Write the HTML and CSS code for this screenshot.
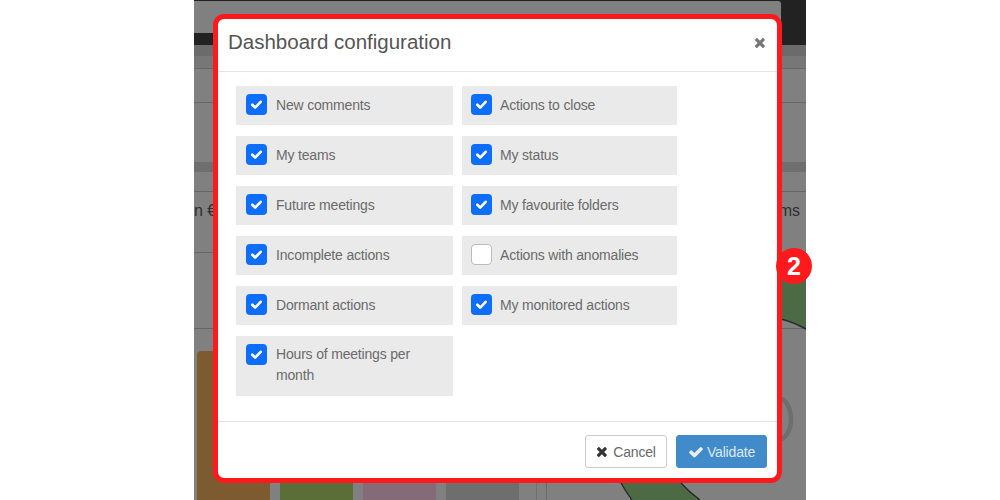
FILE: index.html
```html
<!DOCTYPE html>
<html lang="en">
<head>
<meta charset="utf-8">
<title>Dashboard configuration</title>
<link rel="stylesheet" href="styles.css">
</head>
<body>
<svg class="sprite" width="0" height="0" aria-hidden="true">
  <symbol id="fa-check" viewBox="0 0 1792 1792"><path d="M1671 566q0 40-28 68l-724 724-136 136q-28 28-68 28t-68-28l-136-136-362-362q-28-28-28-68t28-68l136-136q28-28 68-28t68 28l294 295 656-657q28-28 68-28t68 28l136 136q28 28 28 68z"/></symbol>
  <symbol id="fa-times" viewBox="0 0 1792 1792"><path d="M1298 1322q0 40-28 68l-136 136q-28 28-68 28t-68-28l-294-294-294 294q-28 28-68 28t-68-28l-136-136q-28-28-28-68t28-68l294-294-294-294q-28-28-28-68t28-68l136-136q28-28 68-28t68 28l294 294 294-294q28-28 68-28t68 28l136 136q28 28 28 68t-28 68l-294 294 294 294q28 28 28 68z"/></symbol>
  <symbol id="tick" viewBox="0 0 22 22"><path d="M6.6 11.2l3 3 5.8-6" fill="none" stroke="#fff" stroke-width="2.8" stroke-linecap="round" stroke-linejoin="round"/></symbol>
</svg>
<div class="stage">
  <div class="app">
    <div class="topbar"><div class="tab"></div></div>
    <div class="band"></div>
    <div class="row row-a"></div>
    <div class="row row-b"></div>
    <div class="row row-c"></div>
    <div class="sep"></div>
    <div class="row row-d"></div>
    <div class="row row-e"><span>n €</span><span>ms</span></div>
    <div class="row row-f"></div>
    <div class="bottom">
      <div class="cards">
        <div class="bar bar-brown"></div>
        <div class="bar bar-green"></div>
        <div class="bar bar-pink"></div>
        <div class="bar bar-gray"></div>
      </div>
      <div class="chart">
        <svg class="chart-svg" viewBox="0 0 259 171" width="259" height="171">
          <path d="M74 154Q79 163 85 171H153Q142 163 134 154Z" fill="#4c6b45"/>
          <path d="M74 154Q79 163 85 171M134 154Q142 163 153 171" stroke="#222" stroke-width="1.2" fill="none"/>
          <ellipse cx="231" cy="90" rx="13" ry="21" fill="none" stroke="#6e6e6e" stroke-width="4.5"/>
        </svg>
      </div>
    </div>
    <svg class="slice" viewBox="0 0 25 70" width="25" height="70"><path d="M0 0H25V49Q12 42 0 39Z" fill="#4c6b45"/><path d="M0 39Q12 42 25 49" stroke="#2a2a2a" stroke-width="1.6" fill="none"/></svg>
  </div>

  <div class="modal">
    <header class="modal-head">
      <h1 class="modal-title">Dashboard configuration</h1>
      <svg class="close" width="15" height="15"><use href="#fa-times"/></svg>
    </header>
    <div class="modal-body">
      <label class="opt"><span class="box on"><svg width="21" height="21"><use href="#tick"/></svg></span><span class="lbl">New comments</span></label>
      <label class="opt"><span class="box on"><svg width="21" height="21"><use href="#tick"/></svg></span><span class="lbl">Actions to close</span></label>
      <label class="opt"><span class="box on"><svg width="21" height="21"><use href="#tick"/></svg></span><span class="lbl">My teams</span></label>
      <label class="opt"><span class="box on"><svg width="21" height="21"><use href="#tick"/></svg></span><span class="lbl">My status</span></label>
      <label class="opt"><span class="box on"><svg width="21" height="21"><use href="#tick"/></svg></span><span class="lbl">Future meetings</span></label>
      <label class="opt"><span class="box on"><svg width="21" height="21"><use href="#tick"/></svg></span><span class="lbl">My favourite folders</span></label>
      <label class="opt"><span class="box on"><svg width="21" height="21"><use href="#tick"/></svg></span><span class="lbl">Incomplete actions</span></label>
      <label class="opt"><span class="box"></span><span class="lbl">Actions with anomalies</span></label>
      <label class="opt"><span class="box on"><svg width="21" height="21"><use href="#tick"/></svg></span><span class="lbl">Dormant actions</span></label>
      <label class="opt"><span class="box on"><svg width="21" height="21"><use href="#tick"/></svg></span><span class="lbl">My monitored actions</span></label>
      <label class="opt opt-tall"><span class="box on"><svg width="21" height="21"><use href="#tick"/></svg></span><span class="lbl">Hours of meetings per month</span></label>
    </div>
    <footer class="modal-foot">
      <button class="btn btn-cancel" type="button"><svg width="15" height="15"><use href="#fa-times"/></svg>Cancel</button>
      <button class="btn btn-ok" type="button"><svg width="16" height="16"><use href="#fa-check"/></svg>Validate</button>
    </footer>
  </div>
  <div class="badge">2</div>
</div>
</body>
</html>
```

FILE: styles.css
```css
* { box-sizing: border-box; }
html, body { margin: 0; padding: 0; background: #fff; }
body { font-family: "Liberation Sans", Arial, sans-serif; color: #555; overflow: hidden; }
.sprite { position: absolute; }

.stage { position: relative; width: 1000px; height: 500px; display: flex; justify-content: center; }

/* dimmed application behind the dialog */
.app { position: relative; width: 612px; height: 500px; background: #808080; display: flex; flex-direction: column; overflow: hidden; }
.topbar { height: 45px; background: #222; flex: none; padding-top: 1px; }
.tab { width: 587px; height: 32px; background: #808080; border-radius: 0 3px 3px 0; }
.band { height: 11px; flex: none; background: #6b6b6b; }
.row { flex: none; border-bottom: 1px solid #666; }
.row-a { height: 13px; background: #777; }
.row-b { height: 34px; }
.row-c { height: 59px; border-bottom: 0; }
.sep { height: 10px; flex: none; background: #6f6f6f; }
.row-d { height: 20px; }
.row-e { height: 61px; display: flex; justify-content: space-between; align-items: center; font-size: 16px; color: #2e2e2e; padding-bottom: 23px; }
.row-e span:last-child { padding-right: 6px; }
.row-f { height: 76px; }

.bottom { flex: 1; display: flex; position: relative; }
.cards { width: 343px; display: flex; gap: 9.5px; padding: 22px 0 0 2.5px; flex: none; border-right: 1px solid #707070; }
.bar { width: 73.5px; border-radius: 4px 4px 0 0; }
.bar-brown { background: #7d5a30; }
.bar-green { background: #5b6e37; }
.bar-pink { background: #856a78; }
.bar-gray { background: #6e6e6e; }
.chart { flex: 1; border-left: 1px solid #6a6a6a; margin-left: 9px; }
.chart-svg { display: block; }
.slice { position: absolute; left: 587px; top: 280px; }

/* dialog */
.modal { position: absolute; left: 213px; top: 14px; width: 569px; height: 469px; background: #fff; border: 5px solid #fe1a1c; border-radius: 11px; display: flex; flex-direction: column; }
.modal-head { height: 53px; flex: none; border-bottom: 1px solid #e5e5e5; padding: 0 8px 6px 10px; display: flex; align-items: center; justify-content: space-between; }
.modal-title { margin: 0; font-size: 20.5px; font-weight: 400; color: #555; line-height: 1.2; }
.close { fill: #777; }

.modal-body { flex: 1; padding: 14px 0 0 18px; display: grid; grid-template-columns: 217px 215px; column-gap: 9px; row-gap: 11px; align-content: start; }
.opt { display: flex; gap: 9px; align-items: flex-start; background: #eaeaea; padding: 8px 10px 0; min-height: 39px; font-size: 14px; letter-spacing: -0.18px; line-height: 21px; color: #6a6a6a; }
.opt:nth-child(even) { gap: 8px; padding-left: 9px; }
.lbl { padding-top: 1px; }
.opt-tall { height: 60px; }
.opt-tall .lbl { padding-top: 0; }
.box { flex: none; width: 21px; height: 21px; border-radius: 4px; background: #fff; border: 1px solid #bbb; display: block; }
.box.on { background: #0d6efd; border: 0; }
.box svg { display: block; }

.modal-foot { height: 57px; flex: none; border-top: 1px solid #e1e1e1; display: flex; justify-content: flex-end; gap: 9px; padding: 13px 10px 0 0; }
.btn { height: 33px; border-radius: 3px; font-family: inherit; font-size: 14px; letter-spacing: -0.18px; display: flex; align-items: center; justify-content: center; padding: 0; }
.btn-cancel { width: 82px; gap: 2px; background: #fff; border: 1px solid #ccc; color: #6a6a6a; }
.btn-cancel svg { fill: #333; }
.btn-ok { width: 91px; gap: 3px; background: #428bca; border: 1px solid #428bca; color: #dbe8f3; }
.btn-ok svg { fill: #e6eff7; }

.badge { position: absolute; left: 776px; top: 248px; width: 36px; height: 36px; border-radius: 50%; background: #fe1a1c; color: #fff; font-size: 25px; font-weight: 700; display: flex; align-items: center; justify-content: center; }
```
